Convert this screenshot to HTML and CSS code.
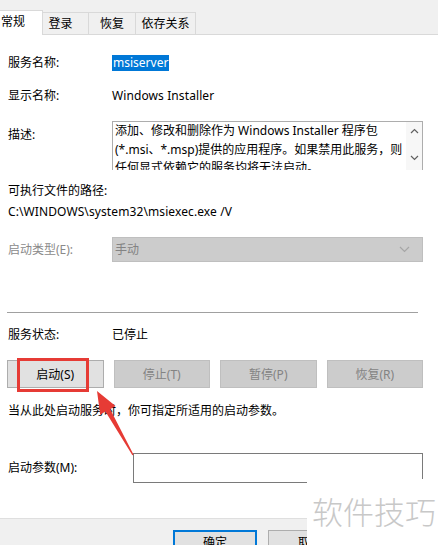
FILE: index.html
```html
<!DOCTYPE html>
<html lang="zh-CN">
<head>
    <meta charset="UTF-8">
    <title>msiserver 的属性</title>
    <link rel="stylesheet" href="styles.css">
</head>
<body>

<div class="tabbar">
    <div class="tab active">常规</div>
    <div class="tab tab-login">登录</div>
    <div class="tab tab-recover">恢复</div>
    <div class="tab tab-deps">依存关系</div>
</div>

<div class="panel">
    <div class="row row-name">
        <span>服务名称:</span>
        <span><span class="selected">msiserver</span></span>
    </div>
    <div class="row row-display">
        <span>显示名称:</span>
        <span class="latin">Windows Installer</span>
    </div>
    <div class="row row-desc">
        <span class="desc-label">描述:</span>
        <div class="desc">
            <div class="desc-text">添加、修改和删除作为 Windows Installer 程序包<br>(*.msi、*.msp)提供的应用程序。如果禁用此服务，则<br>任何显式依赖它的服务均将无法启动。</div>
            <div class="desc-scroll">
                <svg width="9" height="6" viewBox="0 0 9 6"><polyline points="1,5 4.5,1.5 8,5" fill="none" stroke="#606060" stroke-width="1.2"/></svg>
                <svg width="9" height="6" viewBox="0 0 9 6"><polyline points="1,1 4.5,4.5 8,1" fill="none" stroke="#606060" stroke-width="1.2"/></svg>
            </div>
        </div>
    </div>
    <div class="line line-exe">可执行文件的路径:</div>
    <div class="line line-path latin">C:\WINDOWS\system32\msiexec.exe /V</div>
    <div class="row row-type">
        <span class="disabled-text">启动类型(E):</span>
        <div class="select">
            <span>手动</span>
            <svg width="11" height="7" viewBox="0 0 11 7"><polyline points="1,1 5.5,5.5 10,1" fill="none" stroke="#a6a6a6" stroke-width="1.2"/></svg>
        </div>
    </div>

    <div class="separator"></div>

    <div class="row row-status">
        <span>服务状态:</span>
        <span>已停止</span>
    </div>
    <div class="buttons">
        <button class="btn">启动(S)</button>
        <button class="btn" disabled>停止(T)</button>
        <button class="btn" disabled>暂停(P)</button>
        <button class="btn" disabled>恢复(R)</button>
    </div>
    <div class="line line-hint">当从此处启动服务时，你可指定所适用的启动参数。</div>
    <div class="row row-param">
        <span>启动参数(M):</span>
        <div class="param-input"></div>
    </div>
</div>

<div class="footer">
    <button class="btn btn-default">确定</button>
    <button class="btn">取消</button>
</div>

<div class="highlight-box"></div>
<svg class="arrow" width="438" height="545" viewBox="0 0 438 545">
    <polygon points="97,391 115.5,406 110.2,409.2 133.6,454.8 132.4,455.3 105.4,411.6 100.2,414.8" fill="#e63b35"/>
</svg>
<div class="watermark">软件技巧</div>

</body>
</html>
```

FILE: styles.css
```css
body {
    margin: 0;
    width: 438px;
    height: 545px;
    overflow: hidden;
    position: relative;
    background-color: #FFFFFF;
    color: #000000;
    font-family: "Noto Sans", "Noto Sans CJK SC", sans-serif;
    font-size: 12px;
}

.tabbar {
    height: 34px;
    background-color: #F0F0F0;
    border-bottom: 1px solid #D9D9D9;
    display: flex;
    align-items: flex-end;
}

.tab {
    height: 22px;
    line-height: 22px;
    box-sizing: border-box;
    border: 1px solid #D9D9D9;
    border-bottom: none;
    margin-left: -1px;
    text-align: center;
    background-color: #F0F0F0;
}

.tab.active {
    height: 25px;
    line-height: 22px;
    margin-left: 0;
    margin-bottom: -1px;
    width: 43px;
    padding-right: 16px;
    border-left: none;
    background-color: #FFFFFF;
    position: relative;
}

.tab-login {
    width: 47px;
    padding-right: 10px;
}

.tab-recover {
    width: 48px;
}

.tab-deps {
    width: 61px;
}

.panel {
    padding: 0 15px 0 8px;
}

.row {
    display: grid;
    grid-template-columns: 104px 1fr;
    align-items: center;
    height: 20px;
    line-height: 20px;
}

.line {
    height: 20px;
    line-height: 20px;
}

.row-name {
    margin-top: 18px;
}

.selected {
    display: inline-block;
    line-height: 16px;
    padding: 0 1px;
    background-color: #0078D7;
    color: #FFFFFF;
}

.row-display {
    margin-top: 13px;
}

.latin {
    letter-spacing: 0.1px;
}

.row-desc {
    margin-top: 15px;
    height: 49px;
    align-items: start;
}

.desc-label {
    margin-top: 4px;
}

.desc {
    height: 49px;
    border: 1px solid #ADADAD;
    border-bottom: none;
    box-sizing: border-box;
    display: flex;
    overflow: hidden;
}

.desc-text {
    flex: 1;
    padding: 0 0 0 2px;
    line-height: 18.5px;
    white-space: nowrap;
    overflow: hidden;
}

.desc-scroll {
    width: 16px;
    background-color: #F7F7F7;
    display: flex;
    flex-direction: column;
    align-items: center;
    justify-content: space-between;
    padding: 6px 0 9px;
    box-sizing: border-box;
}

.desc-scroll svg {
    display: block;
}

.line-exe {
    margin-top: 11px;
}

.line-path {
    margin-top: 1px;
}

.row-type {
    margin-top: 15px;
    height: 25px;
}

.disabled-text {
    color: #8A8A8A;
}

.select {
    height: 25px;
    box-sizing: border-box;
    background-color: #CCCCCC;
    border: 1px solid #BFBFBF;
    color: #838383;
    display: flex;
    align-items: center;
    justify-content: space-between;
    padding: 0 12px 0 2px;
}

.separator {
    margin: 50px 5px 0 -1px;
    height: 1px;
    background-color: #A0A0A0;
}

.row-status {
    margin-top: 12px;
}

.buttons {
    margin: 15px 0 0 -1px;
    display: grid;
    grid-template-columns: repeat(4, 1fr);
    column-gap: 10px;
}

.btn {
    height: 28px;
    font-family: "Noto Sans", "Noto Sans CJK SC", sans-serif;
    font-size: 12px;
    color: #000000;
    background-color: #E1E1E1;
    border: 1px solid #ADADAD;
    padding: 0;
}

.btn:disabled {
    background-color: #CCCCCC;
    border-color: #BFBFBF;
    color: #838383;
}

.line-hint {
    margin-top: 13px;
}

.row-param {
    margin-top: 32px;
    height: 30px;
    grid-template-columns: 125px 1fr;
}

.param-input {
    height: 30px;
    box-sizing: border-box;
    border: 1px solid #7A7A7A;
    background-color: #FFFFFF;
}

.footer {
    margin-top: 35px;
    height: 27px;
    box-sizing: border-box;
    overflow: hidden;
    border-top: 1px solid #DFDFDF;
    background-color: #F0F0F0;
    display: flex;
    align-items: flex-start;
    gap: 11px;
    padding: 11px 0 0 173px;
}

.footer .btn {
    width: 84px;
    height: 23px;
    flex-shrink: 0;
}

.btn-default {
    border: 2px solid #0078D7;
}

.highlight-box {
    position: absolute;
    left: 17px;
    top: 358px;
    width: 72px;
    height: 34px;
    box-sizing: border-box;
    border: 3px solid #E63B35;
}

.arrow {
    position: absolute;
    left: 0;
    top: 0;
    pointer-events: none;
}

.watermark {
    position: absolute;
    left: 307px;
    top: 479px;
    width: 131px;
    height: 66px;
    background-color: #FFFFFF;
    color: #C8C8C8;
    font-family: "Noto Sans CJK SC", sans-serif;
    font-weight: 300;
    font-size: 31px;
    line-height: 31px;
    padding: 16px 0 0 5px;
    box-sizing: border-box;
    white-space: nowrap;
}
```
